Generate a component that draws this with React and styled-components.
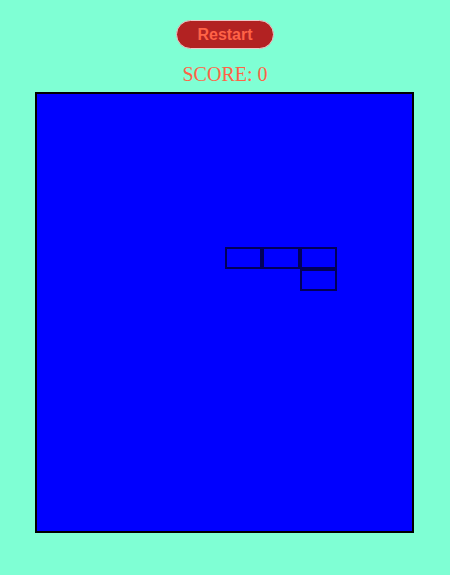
import React from "react";
import styled, { createGlobalStyle } from "styled-components";

const GlobalStyle = createGlobalStyle`
  html, body {
    margin: 0;
    padding: 0;
    background: #7fffd4;
  }
  body {
    font-family: "Liberation Serif", "Times New Roman", serif;
  }
`;

const Page = styled.div`
  display: flex;
  flex-direction: column;
  align-items: center;
  padding-top: 20px;
`;

const RestartButton = styled.button`
  box-sizing: border-box;
  width: 98px;
  height: 29px;
  padding: 0;
  border: 1.5px solid #ecc9c9;
  border-radius: 15px;
  background: #b22222;
  color: #ff6347;
  font-family: "Liberation Sans", Arial, sans-serif;
  font-weight: bold;
  font-size: 16px;
  line-height: 1;
  cursor: pointer;
`;

const Score = styled.div`
  margin-top: 14px;
  font-family: "Liberation Serif", "Times New Roman", serif;
  font-size: 20px;
  line-height: 23px;
  color: #ff6347;
`;

const Board = styled.div`
  margin-top: 6px;
  margin-right: 1px;
  width: 375px;
  height: 437px;
  border: 2px solid #000;
  background: #0000ff;
  display: grid;
  grid-template-columns: repeat(10, 1fr);
  grid-template-rows: repeat(20, 1fr);
`;

const Cell = styled.div`
  box-sizing: border-box;
  grid-column: ${(p) => p.$col + 1};
  grid-row: ${(p) => p.$row + 1};
  border: 2px solid #00005a;
  background: #0000ff;
`;

const piece = [
  { col: 5, row: 7 },
  { col: 6, row: 7 },
  { col: 7, row: 7 },
  { col: 7, row: 8 },
];

export default function App() {
  return (
    <>
      <GlobalStyle />
      <Page>
        <RestartButton>Restart</RestartButton>
        <Score>SCORE: 0</Score>
        <Board>
          {piece.map((c, i) => (
            <Cell key={i} $col={c.col} $row={c.row} />
          ))}
        </Board>
      </Page>
    </>
  );
}
